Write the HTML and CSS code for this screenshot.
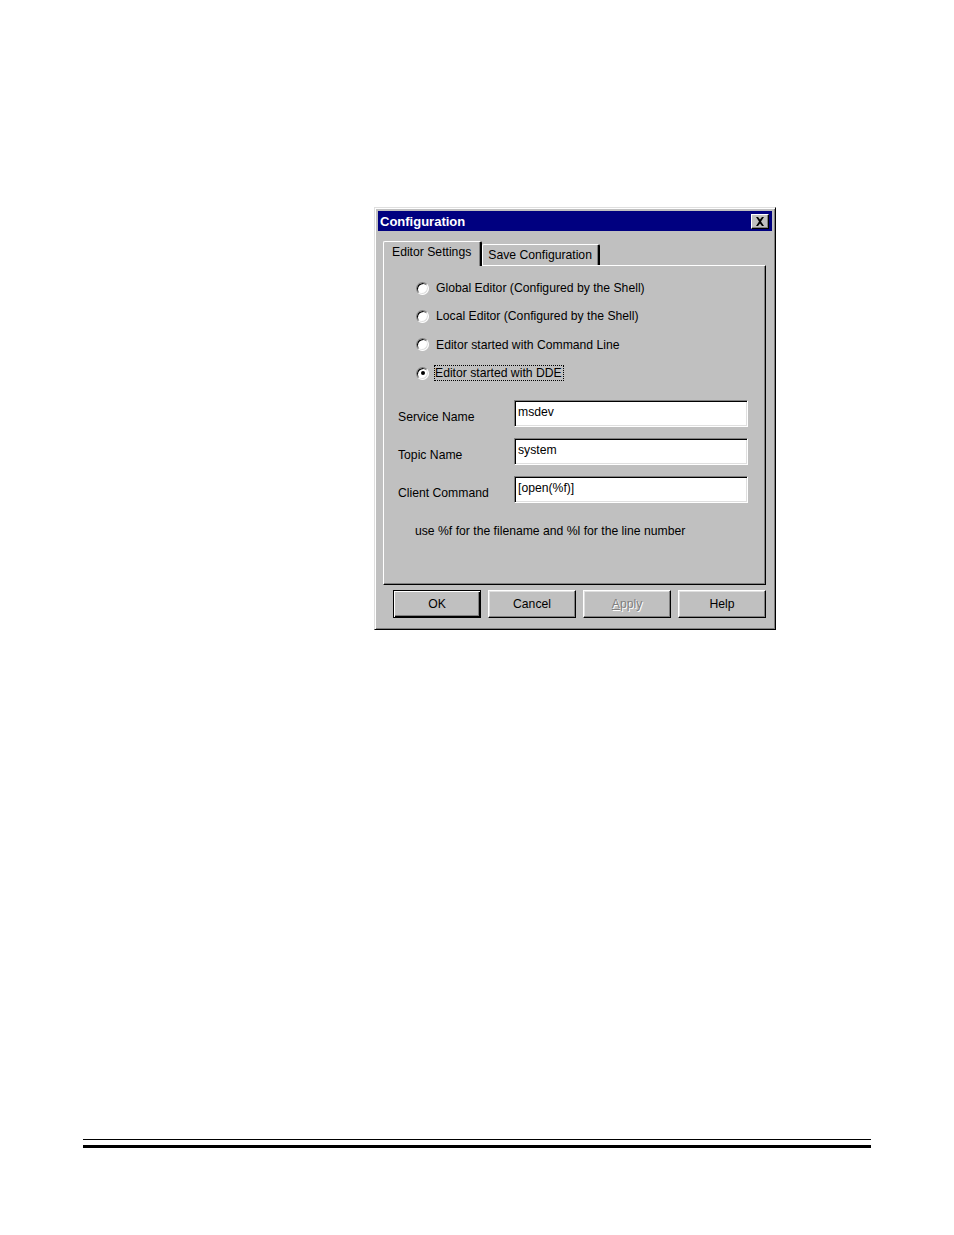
FILE: index.html
```html
<!DOCTYPE html>
<html>
<head>
<meta charset="utf-8">
<link rel="stylesheet" href="styles.css">
</head>
<body>
<div class="page">
  <div class="dialog">
    <div class="titlebar">
      <span class="title">Configuration</span>
      <span class="close"><svg width="10" height="9" viewBox="0 0 10 9"><path d="M1 0h2l2 2.5L7 0h2L6 4.5 9 9H7L5 6.5 3 9H1l3-4.5z" fill="#000"/></svg></span>
    </div>
    <div class="tabs">
      <div class="tab active">Editor Settings</div>
      <div class="tab">Save Configuration</div>
    </div>
    <div class="panel">
      <div class="radios">
        <div class="radio"><span class="rb"></span><span>Global Editor (Configured by the Shell)</span></div>
        <div class="radio"><span class="rb"></span><span>Local Editor (Configured by the Shell)</span></div>
        <div class="radio"><span class="rb"></span><span>Editor started with Command Line</span></div>
        <div class="radio"><span class="rb on"></span><span class="focus">Editor started with DDE</span></div>
      </div>
      <div class="fields">
        <div class="field"><span class="lbl">Service Name</span><span class="input">msdev</span></div>
        <div class="field"><span class="lbl">Topic Name</span><span class="input">system</span></div>
        <div class="field"><span class="lbl">Client Command</span><span class="input">[open(%f)]</span></div>
      </div>
      <div class="hint">use %f for the filename and %l for the line number</div>
    </div>
    <div class="buttons">
      <div class="btn default"><span>OK</span></div>
      <div class="btn"><span>Cancel</span></div>
      <div class="btn disabled"><span><u>A</u>pply</span></div>
      <div class="btn"><span>Help</span></div>
    </div>
  </div>
  <div class="footer">
    <div class="thin"></div>
    <div class="thick"></div>
  </div>
</div>
</body>
</html>
```
FILE: styles.css
```css
html, body {
  margin: 0;
  padding: 0;
  background: #fff;
}
body {
  font-family: "Liberation Sans", Arial, sans-serif;
  font-size: 12.2px;
  color: #000;
}
.page {
  width: 954px;
  height: 1235px;
  position: relative;
  padding-top: 207px;
  box-sizing: border-box;
}
.dialog {
  margin-left: 374px;
  width: 402px;
  height: 423px;
  box-sizing: border-box;
  background: #c0c0c0;
  border: 1px solid;
  border-color: #dfdfdf #000 #000 #dfdfdf;
  box-shadow: inset 1px 1px 0 #fff, inset -1px -1px 0 #808080;
  padding: 3px;
}
.titlebar {
  height: 20px;
  background: #000080;
  display: flex;
  align-items: center;
  justify-content: space-between;
  padding: 0 3px 0 2px;
}
.title {
  color: #fff;
  font-weight: bold;
  font-size: 13px;
}
.close {
  width: 18px;
  height: 15px;
  box-sizing: border-box;
  background: #c0c0c0;
  border: 1px solid;
  border-color: #fff #000 #000 #fff;
  box-shadow: inset -1px -1px 0 #808080;
  display: flex;
  align-items: center;
  justify-content: center;
}
.tabs {
  display: flex;
  align-items: flex-end;
  margin-top: 9px;
  margin-left: 5px;
  height: 25px;
  position: relative;
  z-index: 1;
}
.tab {
  height: 21px;
  box-sizing: border-box;
  padding: 0 6px 0 5px;
  display: flex;
  align-items: center;
  white-space: nowrap;
  border-top: 1px solid #fff;
  border-left: 1px solid #fff;
  border-right: 2px solid #000;
  border-radius: 2px 2px 0 0;
  box-shadow: inset -1px 0 0 #808080;
  background: #c0c0c0;
}
.tab.active {
  height: 25px;
  margin-bottom: -1px;
  padding: 0 9px 4px 8px;
}
.panel {
  margin-left: 5px;
  width: 383px;
  height: 320px;
  box-sizing: border-box;
  border: 1px solid;
  border-color: #fff #000 #000 #fff;
  box-shadow: inset -1px -1px 0 #808080;
  padding: 14px 0 0 33px;
}
.radios {
  display: flex;
  flex-direction: column;
  gap: 12.4px;
}
.radio {
  display: flex;
  align-items: center;
  height: 16px;
}
.rb {
  width: 13px;
  height: 13px;
  border-radius: 50%;
  background: #fff;
  box-sizing: border-box;
  border: 1px solid;
  border-color: #808080 #fff #fff #808080;
  box-shadow: inset 1px 1px 0 #000, inset -1px -1px 0 #dfdfdf;
  margin-left: -1px;
  margin-right: 7px;
  position: relative;
}
.rb.on::after {
  content: "";
  position: absolute;
  left: 3.5px;
  top: 3.5px;
  width: 4px;
  height: 4px;
  border-radius: 50%;
  background: #000;
}
.focus {
  outline: 1px dotted #000;
  outline-offset: 0;
  padding: 0 1px 0 0;
  margin-left: -1px;
}
.fields {
  margin-top: 19px;
  margin-left: -19px;
  display: flex;
  flex-direction: column;
  gap: 11px;
}
.field {
  display: flex;
  align-items: center;
  height: 27px;
}
.lbl {
  width: 116px;
  padding-top: 7px;
}
.input {
  width: 234px;
  height: 27px;
  box-sizing: border-box;
  background: #fff;
  border: 1px solid;
  border-color: #808080 #fff #fff #808080;
  box-shadow: inset 1px 1px 0 #000, inset -1px -1px 0 #dfdfdf;
  padding: 3px 0 0 3px;
  line-height: 16px;
}
.hint {
  margin-top: 21px;
  margin-left: -2px;
}
.buttons {
  display: flex;
  gap: 7px;
  margin-top: 5px;
  margin-left: 15px;
}
.btn {
  width: 88px;
  height: 28px;
  box-sizing: border-box;
  border: 1px solid;
  border-color: #fff #000 #000 #fff;
  box-shadow: inset -1px -1px 0 #808080, inset 1px 1px 0 #dfdfdf;
  display: flex;
  align-items: center;
  justify-content: center;
}
.btn.default {
  border: 1px solid #000;
  box-shadow: inset 1px 1px 0 #fff, inset -1px -1px 0 #000, inset -2px -2px 0 #808080;
}
.btn.disabled {
  color: #808080;
  text-shadow: 1px 1px 0 #fff;
}
.footer {
  position: absolute;
  left: 83px;
  top: 1139px;
  width: 788px;
}
.thin {
  height: 1px;
  background: #000;
}
.thick {
  height: 3px;
  background: #000;
  margin-top: 5px;
}
```
